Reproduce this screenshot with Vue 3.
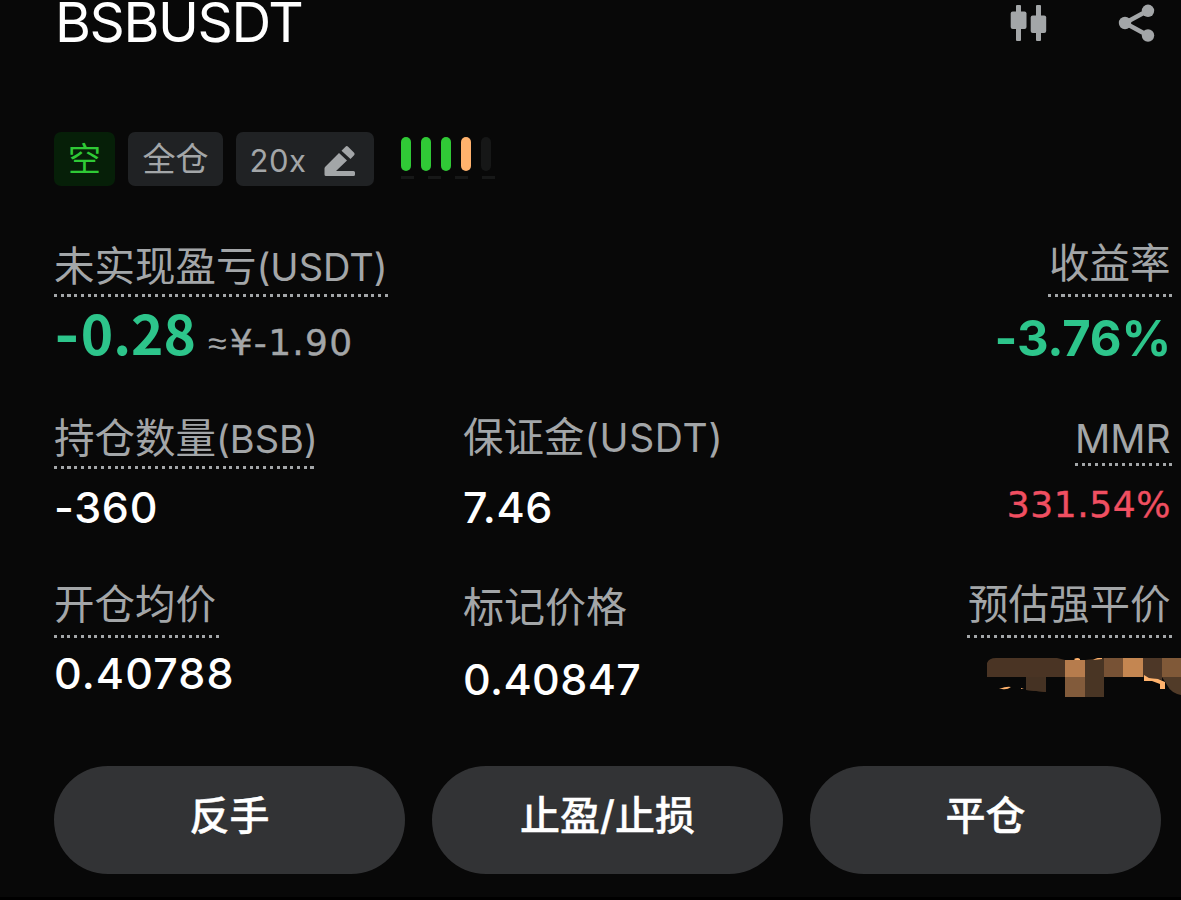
<script setup>
const actions = ['反手', '止盈/止损', '平仓'];
const signal = ['on', 'on', 'on', 'warn', 'off'];
</script>

<template>
    <main class="position">
        <header class="header">
            <h1>BSBUSDT</h1>
            <div class="tools">
                <svg class="candles" width="38" height="38" viewBox="0 0 38 38">
                    <path d="M6 2q0-1 1-1h3q1 0 1 1v34q0 1-1 1H7q-1 0-1-1zM26 2q0-1 1-1h3q1 0 1 1v34q0 1-1 1h-3q-1 0-1-1z" />
                    <rect x="0.700" y="7.500" width="15.800" height="17.500" rx="2" />
                    <rect x="20.700" y="11.500" width="15.500" height="17.500" rx="2" />
                </svg>
                <svg class="share" width="38" height="38" viewBox="0 0 38 38">
                    <path d="M30 6.500L7 19l23 12.500" fill="none" stroke="#a3a6a8" stroke-width="4.500" />
                    <circle cx="30" cy="6.800" r="6.200" />
                    <circle cx="7" cy="19" r="6.200" />
                    <circle cx="30" cy="31.500" r="6.200" />
                </svg>
            </div>
        </header>

        <section class="tags">
            <span class="tag short">空</span>
            <span class="tag cross">全仓</span>
            <span class="tag leverage">
                <b>20x</b>
                <svg width="32" height="32" viewBox="0 0 32 32">
                    <path d="M.500 29.500V23.500Q.500 22.500 1.500 21.500L15 8l8 7.500L12 26H29.500q1.500 0 1.500 1.500v2q0 1.500-1.500 1.500H2Q.500 31 .500 29.500zM17.500 5.800L21.500 1.700q1.300-1.200 2.600 0l6 6q1.200 1.300 0 2.600l-3.600 3.700z" />
                </svg>
            </span>
            <div class="signal">
                <div class="bars">
                    <i v-for="(level, i) in signal" :key="i" :class="level"></i>
                </div>
                <div class="dashes"><i></i><i></i><i></i><i></i></div>
            </div>
        </section>

        <section class="row row-pnl">
            <div class="cell">
                <span class="label dotted l-pnl">未实现盈亏<em>(USDT)</em></span>
                <div class="pnl">
                    <strong><span class="minus">-</span>0.28</strong>
                    <span class="approx">≈</span>
                    <span class="cny">¥-1.90</span>
                </div>
            </div>
            <div class="cell right">
                <span class="label dotted l-roi">收益率</span>
                <strong class="roi">-3.76%</strong>
            </div>
        </section>

        <section class="row row-size">
            <div class="cell">
                <span class="label dotted l-size">持仓数量<em>(BSB)</em></span>
                <span class="value v-size">-360</span>
            </div>
            <div class="cell">
                <span class="label l-margin">保证金<em>(USDT)</em></span>
                <span class="value v-margin">7.46</span>
            </div>
            <div class="cell right">
                <span class="label dotted l-mmr"><em>MMR</em></span>
                <span class="mmr">331.54%</span>
            </div>
        </section>

        <section class="row row-price">
            <div class="cell">
                <span class="label dotted l-entry">开仓均价</span>
                <span class="value v-entry">0.40788</span>
            </div>
            <div class="cell">
                <span class="label l-mark">标记价格</span>
                <span class="value v-mark">0.40847</span>
            </div>
            <div class="cell right">
                <span class="label dotted l-liq">预估强平价</span>
                <!-- liquidation price is hidden behind mosaic blocks -->
                <svg class="mosaic" width="194" height="40" viewBox="0 0 194 40">
                    <path fill="#4a3424" d="M0 5Q2 0 9 0H70L78 2V19H59V34L39 32V19H0z" />
                    <path fill="#453223" d="M39 19h20v15l-20-2z" />
                    <path fill="#b67c4d" d="M78 2h20v17H78z" />
                    <path fill="#825b3b" d="M78 19h20v20H78z" />
                    <path fill="#493524" d="M98 2l19-2v39H98z" />
                    <path fill="#775235" d="M117 0h19v19h-19z" />
                    <path fill="#c48651" d="M136 0h20v19h-20z" />
                    <path fill="#4d3727" d="M156 0h19v22l-19-3z" />
                    <path fill="#805938" d="M175 0h19v19h-19z" />
                    <path fill="#513b28" d="M175 19h19v18q-10-2-14-10z" />
                    <path fill="#ffb26d" d="M157 17l5 3 9 1 7 3v7h-5v-5l-8-3h-8zM12 31q8-3 12-2-4 3-9 2zM34 30l3 1h-3zM87 1q4-2 6 0v1h-5zM106 2q5-3 9-2v1z" />
                </svg>
            </div>
        </section>

        <footer class="actions">
            <button v-for="text in actions" :key="text">{{ text }}</button>
        </footer>
    </main>
</template>

<style>
body {
    background: #080808;
}
</style>

<style scoped>
.position {
    box-sizing: border-box;
    width: 1181px;
    height: 900px;
    overflow: hidden;
    padding-left: 54px;
    background: #080808;
    color: #fff;
    font-family: "Noto Sans CJK SC", sans-serif;
    border-bottom: 3px solid #000;
}

.header {
    display: flex;
    justify-content: space-between;
    height: 132px;
}

h1 {
    margin: 0 0 0 1px;
    font-family: Inter, sans-serif;
    font-size: 55px;
    font-weight: 400;
    line-height: 45px;
    letter-spacing: -1.400px;
}

.tools {
    display: flex;
    gap: 70px;
    padding: 4px 25px 0 0;
    fill: #a3a6a8;
}

.tags {
    display: flex;
    height: 111px;
}

.tag {
    display: flex;
    align-items: center;
    justify-content: center;
    box-sizing: border-box;
    height: 54px;
    border-radius: 7px;
    background: #202224;
    color: #a3a6a8;
    font-size: 33px;
    line-height: 54px;
}

.short {
    width: 61px;
    margin-right: 13px;
    padding-bottom: 4px;
    background: #061f08;
    color: #2fc936;
}

.cross {
    width: 95px;
    margin-right: 13px;
    padding-bottom: 4px;
}

.leverage {
    width: 138px;
    gap: 18px;
    padding: 3px 4px 0 0;
    fill: #a3a6a8;
}

.leverage b {
    font-family: Inter, sans-serif;
    font-size: 31px;
    font-weight: 400;
    letter-spacing: 0.500px;
}

.signal {
    margin: 5px 0 0 27px;
}

.bars {
    display: flex;
    gap: 10px;
}

.bars i {
    width: 10.100px;
    height: 34px;
    border-radius: 5px;
    background: #161717;
}

.bars .on {
    background: #30c936;
}

.bars .warn {
    background: #ffb26d;
}

.dashes {
    display: flex;
    gap: 14px;
    margin-top: 5px;
}

.dashes i {
    width: 13px;
    height: 3px;
    background: #171818;
}

.row {
    display: grid;
    grid-template-columns: 409px 409px 1fr;
    padding-right: 8px;
}

.row-pnl {
    grid-template-columns: 1fr 1fr;
    height: 172px;
}

.row-size {
    height: 169px;
}

.row-price {
    height: 182px;
}

.cell {
    display: flex;
    flex-direction: column;
    align-items: flex-start;
}

.right {
    align-items: flex-end;
}

.label {
    box-sizing: border-box;
    height: 54px;
    color: #a3a6a8;
    font-size: 40.500px;
    line-height: 46px;
    white-space: nowrap;
}

.label em {
    font-family: Inter, sans-serif;
    font-style: normal;
    font-size: 39px;
}

/* square dots, one every 6.75px */
.dotted {
    background: repeating-linear-gradient(90deg, #a3a6a8 0 3px, transparent 3px 6.750px) left bottom / 100% 3px no-repeat;
}

.l-pnl {
    width: 334px;
    line-height: 41px;
}

.l-pnl em {
    font-size: 38px;
}

.l-roi {
    width: 125px;
    padding-left: 1px;
    line-height: 36px;
}

.l-size {
    width: 260px;
    line-height: 42px;
}

.l-size em {
    font-size: 38px;
}

.l-margin {
    line-height: 40px;
}

.l-margin em {
    letter-spacing: 0.700px;
}

.l-mmr {
    width: 98px;
    height: 51px;
    line-height: 42px;
}

.l-entry {
    width: 165px;
    line-height: 36px;
}

.l-mark {
    font-size: 41px;
    line-height: 40px;
}

.l-liq {
    width: 206px;
    padding-left: 1px;
    line-height: 36px;
}

.pnl {
    display: flex;
    align-items: baseline;
    height: 80px;
    line-height: 69px;
}

.pnl strong {
    color: #2dc58b;
    font-size: 55px;
}

.minus {
    margin-right: 1px;
    font-family: Inter, sans-serif;
}

.approx {
    margin-left: 12px;
    color: #a3a6a8;
    font-family: "Liberation Sans", sans-serif;
    font-size: 34px;
}

.cny {
    margin-left: 3px;
    color: #a3a6a8;
    font-family: "DejaVu Sans", sans-serif;
    font-size: 36px;
    letter-spacing: 1.300px;
    -webkit-text-stroke: 0.400px #a3a6a8;
}

.roi {
    color: #2dc58b;
    font-family: Inter, sans-serif;
    font-size: 49px;
    font-weight: 700;
    letter-spacing: -0.200px;
    line-height: 84px;
    margin-right: 2px;
}

.value {
    font-family: Inter, sans-serif;
    font-size: 43px;
    font-weight: 500;
    line-height: 80px;
}

.v-size {
    letter-spacing: 0.700px;
    line-height: 76px;
}

.v-margin {
    letter-spacing: 0.600px;
    line-height: 76px;
}

.v-entry {
    letter-spacing: 1.100px;
    line-height: 71px;
}

.v-mark {
    letter-spacing: 0.400px;
    line-height: 82px;
}

.mmr {
    margin-right: 2px;
    color: #f04f61;
    font-family: "DejaVu Sans", sans-serif;
    font-size: 36px;
    letter-spacing: 0.600px;
    line-height: 78px;
    -webkit-text-stroke: 0.400px #f04f61;
}

.mosaic {
    margin: 20px -8px 0 0;
}

.actions {
    display: flex;
    gap: 27px;
}

button {
    width: 351px;
    height: 108px;
    padding: 0 0 14px;
    border: 0;
    border-radius: 54px;
    background: #323335;
    color: #fff;
    font-family: Inter, "Noto Sans CJK SC", sans-serif;
    font-size: 40px;
    font-weight: 500;
    -webkit-text-stroke: 0.400px #fff;
}
</style>
